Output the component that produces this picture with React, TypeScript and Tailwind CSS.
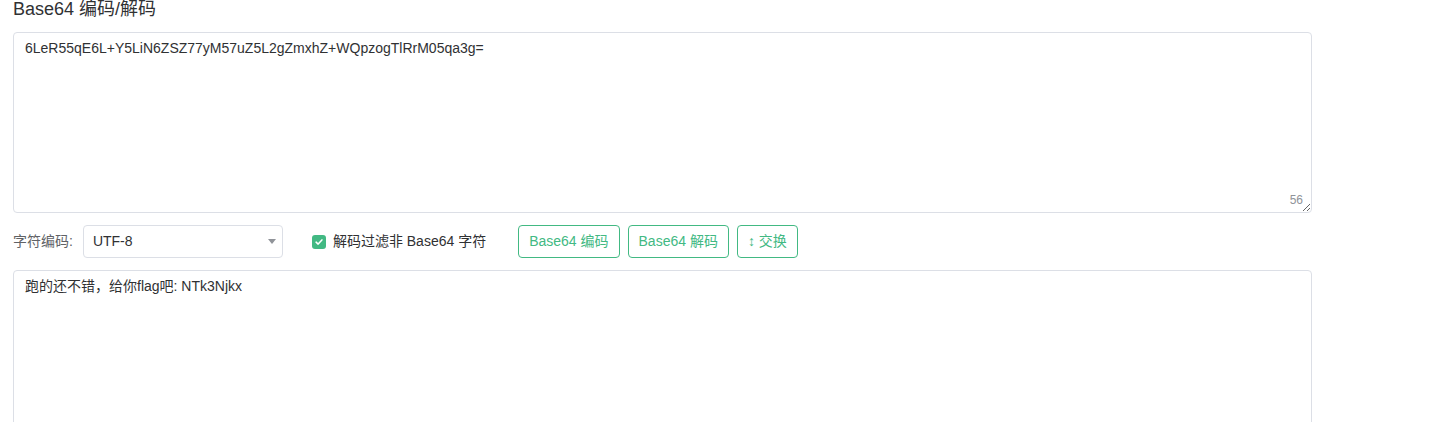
const Check = () => (
  <svg viewBox="0 0 12 12" className="w-[10px] h-[10px]">
    <path d="M2.5 6.2 L5 8.5 L9.5 3.5" fill="none" stroke="white" strokeWidth="1.8" strokeLinecap="round" strokeLinejoin="round" />
  </svg>
);

const App = () => {
  const input = "6LeR55qE6L+Y5LiN6ZSZ77yM57uZ5L2gZmxhZ+WQpzogTlRrM05qa3g=";
  const output = "跑的还不错，给你flag吧: NTk3Njkx";

  return (
    <div className="h-[422px] overflow-hidden bg-white font-['Liberation_Sans','Noto_Sans_CJK_SC',sans-serif] text-[#303133]">
      <div className="pl-[13px] w-[1312px]">
        <h1 className="text-[18px] leading-[18px] text-[#303133]">Base64 编码/解码</h1>

        {/* INPUT */}
        <div className="relative mt-[14px]">
          <textarea
            readOnly
            defaultValue={input}
            className="block w-full h-[181px] border border-[#dcdfe6] rounded-[4px] px-[11px] py-[5px] text-[14px] leading-[20px] text-[#303133] resize-y focus:outline-none"
          />
          <span className="absolute right-[9px] bottom-[4px] text-[12px] text-[#909399]">56</span>
        </div>

        {/* OPTIONS */}
        <div className="flex items-center mt-[12px] h-[33px] text-[14px] text-[#606266]">
          <span>字符编码:</span>
          <div className="ml-[10px] w-[200px] h-[33px] border border-[#dcdfe6] rounded-[4px] flex items-center justify-between pl-[9px] pr-[6px] text-[#303133]">
            <span>UTF-8</span>
            <span className="w-0 h-0 border-l-[4px] border-r-[4px] border-t-[5px] border-l-transparent border-r-transparent border-t-[#909399]" />
          </div>

          <label className="flex items-center ml-[29px]">
            <span className="w-[14px] h-[14px] rounded-[3px] bg-[#42b983] flex items-center justify-center">
              <Check />
            </span>
            <span className="ml-[7px] text-[#303133]">解码过滤非 Base64 字符</span>
          </label>

          <div className="flex ml-[32px] gap-[8px]">
            <button className="h-[33px] px-[10px] border border-[#42b983] rounded-[4px] text-[14px] text-[#42b983] bg-white">Base64 编码</button>
            <button className="h-[33px] px-[10px] border border-[#42b983] rounded-[4px] text-[14px] text-[#42b983] bg-white">Base64 解码</button>
            <button className="h-[33px] px-[10px] border border-[#42b983] rounded-[4px] text-[14px] text-[#42b983] bg-white">↕ 交换</button>
          </div>
        </div>

        {/* OUTPUT */}
        <textarea
          readOnly
          defaultValue={output}
          className="block mt-[12px] w-full h-[200px] border border-[#dcdfe6] rounded-[4px] px-[11px] py-[5px] text-[14px] leading-[20px] text-[#303133] resize-y focus:outline-none"
        />
      </div>
    </div>
  );
};

export default App;
